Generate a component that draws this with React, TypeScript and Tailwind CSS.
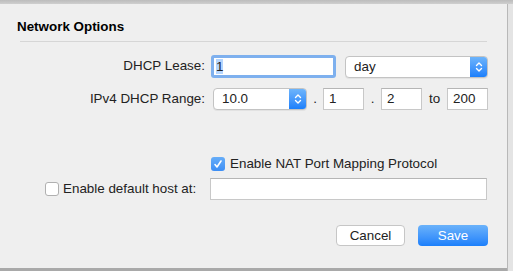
import React from "react";

function Arrows() {
  return (
    <svg width="8" height="12" viewBox="0 0 8 12" fill="none" stroke="white" strokeWidth="1.4" strokeLinecap="round" strokeLinejoin="round">
      <path d="M1.5 4.5 L4 2 L6.5 4.5" />
      <path d="M1.5 7.5 L4 10 L6.5 7.5" />
    </svg>
  );
}

function Select({ value, className }: { value: string; className: string }) {
  return (
    <div className={`flex h-[22px] items-stretch rounded-[4px] border border-[#c3c3c3] bg-white shadow-[0_1px_0_rgba(0,0,0,0.05)] ${className}`}>
      <span className="flex-1 pl-[8px] leading-[20px]">{value}</span>
      <span className="flex w-[17px] items-center justify-center rounded-r-[3px] bg-gradient-to-b from-[#6db4fb] to-[#1a7ffb]">
        <Arrows />
      </span>
    </div>
  );
}

function Field({ value, className }: { value?: string; className: string }) {
  return (
    <div className={`h-[22px] border border-[#c8c8c8] border-t-[#b5b5b5] bg-white pl-[5px] leading-[20px] ${className}`}>
      {value}
    </div>
  );
}

function Check({ checked }: { checked?: boolean }) {
  return checked ? (
    <span className="flex h-[14px] w-[14px] items-center justify-center rounded-[3px] bg-gradient-to-b from-[#66adf8] to-[#3d8ef5]">
      <svg width="10" height="10" viewBox="0 0 10 10" fill="none" stroke="white" strokeWidth="1.6" strokeLinecap="round" strokeLinejoin="round">
        <path d="M2 5.5 L4 8 L8 2" />
      </svg>
    </span>
  ) : (
    <span className="h-[14px] w-[14px] rounded-[3px] border border-[#b0b0b0] bg-white" />
  );
}

export default function App() {
  return (
    <div
      className="flex h-[271px] w-[513px] flex-col bg-[#dcdcdc] text-[13.4px] text-[#222]"
      style={{ fontFamily: '"Liberation Sans", Arial, sans-serif' }}
    >
      {/* top shadow strip */}
      <div className="h-[4px] bg-gradient-to-b from-[#bcbcbc] to-[#cfcfcf]" />
      <div className="flex flex-1">
        <div className="flex w-[508px] flex-col border-r border-[#b8b8b8] bg-[#efefef]">
          <div className="pl-[17px] pt-[15px] text-[13.4px] font-bold leading-[16px] text-black">Network Options</div>
          <div className="mx-[20px] mt-[6px] h-px w-[467px] bg-[#d6d6d6]" />

          {/* DHCP Lease */}
          <div className="mt-[13px] flex items-center">
            <span className="w-[205px] text-right">DHCP Lease:</span>
            <div className="ml-[6px] h-[23px] w-[125px] rounded-[3px] bg-[#7eb0ee] p-[3px]">
              <div className="h-[17px] bg-white pl-[2px] leading-[17px]">
                <span className="bg-[#b4d5fe]">1</span>
              </div>
            </div>
            <Select value="day" className="ml-[9px] w-[143px]" />
          </div>

          {/* IPv4 range */}
          <div className="mt-[10px] flex items-center">
            <span className="w-[205px] text-right">IPv4 DHCP Range:</span>
            <Select value="10.0" className="ml-[8px] w-[94px]" />
            <span className="w-[16px] text-center">.</span>
            <Field value="1" className="w-[41px]" />
            <span className="w-[17px] text-center">.</span>
            <Field value="2" className="w-[41px]" />
            <span className="w-[25px] text-center">to</span>
            <Field value="200" className="w-[41px]" />
          </div>

          {/* NAT */}
          <div className="mt-[46px] flex h-[16px] items-center gap-[5px] pl-[211px]">
            <Check checked />
            <span>Enable NAT Port Mapping Protocol</span>
          </div>

          {/* default host */}
          <div className="mt-[6px] flex items-center">
            <div className="flex w-[210px] items-center gap-[4px] pl-[45px]">
              <Check />
              <span>Enable default host at:</span>
            </div>
            <Field className="w-[277px]" />
          </div>

          {/* buttons */}
          <div className="mt-[25px] flex justify-end gap-[13px] pr-[19px]">
            <button className="h-[21px] w-[69px] rounded-[4px] border border-[#c6c6c6] bg-white text-[13.4px] leading-[19px] text-[#222]">
              Cancel
            </button>
            <button className="h-[21px] w-[70px] rounded-[4px] bg-gradient-to-b from-[#6ab2fa] to-[#1a7ffb] text-[13.4px] leading-[21px] text-white">
              Save
            </button>
          </div>
          <div className="flex-1" />
          <div className="h-[3px] bg-[#a9a9a9]" />
        </div>
        <div className="flex-1 bg-[#e4e4e4]" />
      </div>
    </div>
  );
}
